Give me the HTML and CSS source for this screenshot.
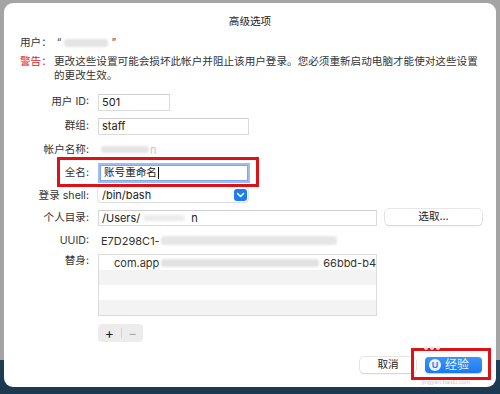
FILE: index.html
```html
<!DOCTYPE html>
<html lang="zh">
<head>
<meta charset="utf-8">
<link rel="stylesheet" href="styles.css">
</head>
<body>
<div class="dialog">
  <div class="title">高级选项</div>
  <div class="userline">用户：<span class="q">“</span><span class="blur b-user"></span><span class="q">”</span></div>
  <div class="warning">
    <span class="warn-label">警告：</span>
    <span class="warn-text">更改这些设置可能会损坏此帐户并阻止该用户登录。您必须重新启动电脑才能使对这些设置<br>的更改生效。</span>
  </div>

  <div class="form">
    <div class="label">用户 ID:</div>
    <div class="cell"><div class="field w-id">501</div></div>

    <div class="label">群组:</div>
    <div class="cell"><div class="field w-group">staff</div></div>

    <div class="label">帐户名称:</div>
    <div class="cell"><span class="plain"><span class="blur b-acct"></span><span class="faint">n</span></span></div>

    <div class="label">全名:</div>
    <div class="cell"><div class="field w-full focus">账号重命名<span class="caret"></span></div></div>

    <div class="label">登录 shell:</div>
    <div class="cell">
      <div class="popup">
        <span>/bin/bash</span>
        <span class="chev"><svg width="9" height="6" viewBox="0 0 9 6"><path d="M1.5 1.5 L4.5 4.5 L7.5 1.5" fill="none" stroke="#fff" stroke-width="1.6" stroke-linecap="round" stroke-linejoin="round"/></svg></span>
      </div>
    </div>

    <div class="label">个人目录:</div>
    <div class="cell home">
      <div class="field w-home">/Users/<span class="blur b-home"></span>n</div>
      <div class="btn choose">选取...</div>
    </div>

    <div class="label">UUID:</div>
    <div class="cell"><span class="plain">E7D298C1-<span class="blur b-uuid"></span></span></div>

    <div class="label top">替身:</div>
    <div class="cell top">
      <div class="list">
        <div class="row"><span class="alias">com.app</span><span class="blur b-alias"></span><span class="alias">66bbd-b4</span></div>
        <div class="row alt"></div>
        <div class="row"></div>
        <div class="row alt"></div>
      </div>
      <div class="pm">
        <span class="plus">+</span><span class="sep"></span><span class="minus">−</span>
      </div>
    </div>
  </div>

  <div class="footer">
    <div class="btn cancel">取消</div>
    <div class="btn ok"><span class="wm-u">U</span><span class="wm-jy">经验</span></div>
  </div>

  <div class="mark mark-name"></div>
  <div class="mark mark-ok"></div>
  <div class="wm-paw"><i></i><i></i><i></i></div>
  <div class="wm-url">jingyan.baidu.com</div>
</div>
</body>
</html>
```

FILE: styles.css
```css
* { box-sizing: border-box; }
html, body { margin: 0; padding: 0; }
body {
  width: 500px;
  height: 394px;
  overflow: hidden;
  background: linear-gradient(to bottom, #a4a4a4 0, #a4a4a4 360px, #1f3d55 360px, #1b3950 394px);
  font-family: Inter, "Noto Sans CJK SC", sans-serif;
  font-size: 10.6px;
  color: #2b2b2b;
}
.dialog {
  position: relative;
  margin: 3px 4px 0 4px;
  width: 492px;
  height: 384px;
  background: #fff;
  border-radius: 9px;
  display: flex;
  flex-direction: column;
}
.title {
  margin-top: 11px;
  height: 16px;
  line-height: 16px;
  text-align: center;
  color: #222;
}
.userline {
  margin-top: 5px;
  height: 16px;
  line-height: 16px;
  padding-left: 16px;
  display: flex;
  align-items: center;
  color: #333;
}
.q { color: #555; }
.q:first-of-type { margin-left: 5px; }
.blur {
  display: inline-block;
  background: #e4e4e4;
  border-radius: 3px;
  filter: blur(0.8px);
  vertical-align: middle;
}
.b-user { width: 44px; height: 8px; margin: 0 3px; }
.warning {
  margin-top: 4px;
  padding-left: 16px;
  display: flex;
  line-height: 14px;
  white-space: nowrap;
}
.warn-label { color: #e2232a; width: 34px; flex: none; }
.warn-text { color: #333; }

.form {
  margin-top: 7px;
  display: grid;
  grid-template-columns: 85px 1fr;
  column-gap: 9px;
  grid-template-rows: 24px 24px 23px 23px 23px 22px 23px auto;
}
.label {
  text-align: right;
  color: #333;
  display: flex;
  align-items: center;
  justify-content: flex-end;
  line-height: 14px;
}
.label.top { align-items: flex-start; padding-top: 2px; }
.cell { display: flex; align-items: center; }
.cell.top { flex-direction: column; align-items: flex-start; }
.field {
  height: 17px;
  line-height: 15px;
  border: 1px solid #dadada;
  border-top-color: #cfcfcf;
  background: #fff;
  padding-left: 3px;
  font-size: 11px;
  color: #222;
  white-space: nowrap;
  overflow: hidden;
  display: flex;
  align-items: center;
}
.w-id { width: 72px; }
.w-group { width: 151px; }
.w-full {
  width: 148px;
  margin-left: 2px;
  height: 16px;
  font-size: 10.6px;
  border-color: #7fa6e6;
  box-shadow: 0 0 0 2px rgba(95, 145, 230, 0.6);
  overflow: visible;
}
.caret { display: inline-block; width: 1px; height: 12px; background: #111; margin-left: 1px; }
.plain { padding-left: 3px; display: flex; align-items: center; color: #333; font-size: 11px; }
.b-acct { width: 48px; height: 7px; }
.faint { color: #c8c8c8; margin-left: 1px; }
.popup {
  width: 150px;
  height: 15px;
  display: flex;
  align-items: center;
  justify-content: space-between;
  padding-left: 4px;
  padding-right: 1px;
  border-radius: 3px;
  box-shadow: 0 0 0 0.5px #d0d0d0, 0 1px 1px rgba(0,0,0,0.08);
  font-size: 11px;
  color: #222;
  margin-top: -2px;
}
.chev {
  width: 13px;
  height: 12px;
  background: #1e7cf2;
  border-radius: 3px;
  display: flex;
  align-items: center;
  justify-content: center;
}
.home { gap: 8px; }
.w-home { width: 279px; height: 16px; }
.b-home { width: 42px; height: 6px; margin: 0 6px 0 3px; background: #ececec; }
.btn {
  height: 16px;
  line-height: 16px;
  text-align: center;
  border-radius: 4px;
  background: #fff;
  box-shadow: 0 0 0 0.5px #cfcfcf, 0 1px 1.5px rgba(0,0,0,0.15);
  color: #222;
  font-size: 10.6px;
}
.choose { width: 97px; margin-top: -2px; }
.b-uuid { width: 176px; height: 9px; background: #e6e6e6; margin-left: 1px; }

.list {
  margin-top: 2px;
  width: 279px;
  border: 1px solid #dcdcdc;
  overflow: hidden;
}
.row {
  height: 15px;
  display: flex;
  align-items: center;
  white-space: nowrap;
  font-size: 11px;
  color: #333;
}
.row.alt { background: #f3f3f3; }
.alias:first-child { margin-left: 15px; }
.b-alias { width: 164px; height: 8px; background: #e2e2e2; margin: 0 4px 0 2px; }
.pm {
  margin-top: 8px;
  width: 45px;
  height: 18px;
  border-radius: 4px;
  background: #ececec;
  display: flex;
  align-items: center;
}
.plus { width: 23px; text-align: center; font-size: 14px; line-height: 16px; color: #222; }
.minus { width: 21px; text-align: center; font-size: 13px; line-height: 16px; color: #a8a8a8; }
.sep { width: 1px; height: 10px; background: #d2d2d2; }

.footer {
  margin-top: 15px;
  display: flex;
  justify-content: flex-end;
  gap: 9px;
  padding-right: 14px;
}
.cancel { width: 56px; }
.ok {
  width: 57px;
  background: linear-gradient(#3d95f8, #1b78f2);
  box-shadow: 0 0.5px 1px rgba(0,0,0,0.2);
  color: #fff;
  display: flex;
  align-items: center;
  padding-left: 4px;
  gap: 4px;
}
.wm-u {
  width: 12px;
  height: 12px;
  border-radius: 50%;
  background: rgba(255,255,255,0.9);
  color: #2a7fe8;
  font-family: "Liberation Sans", sans-serif;
  font-weight: bold;
  font-size: 9px;
  line-height: 12px;
  text-align: center;
}
.wm-jy {
  color: rgba(255,255,255,0.95);
  font-size: 12px;
  line-height: 14px;
}

.mark {
  position: absolute;
  border: 3.5px solid #dd1219;
}
.mark-name { left: 53px; top: 154px; width: 202px; height: 30px; }
.mark-ok { left: 407px; top: 345px; width: 80px; height: 32px; }

.wm-paw {
  position: absolute;
  left: 420px;
  top: 343px;
  display: flex;
  gap: 2px;
}
.wm-paw i {
  display: block;
  width: 4px;
  height: 4px;
  border-radius: 50%;
  background: rgba(235, 235, 235, 0.9);
}
.wm-url {
  position: absolute;
  left: 418px;
  top: 376px;
  font-family: "Liberation Sans", sans-serif;
  font-size: 6px;
  line-height: 7px;
  color: rgba(190, 120, 120, 0.5);
}
```
